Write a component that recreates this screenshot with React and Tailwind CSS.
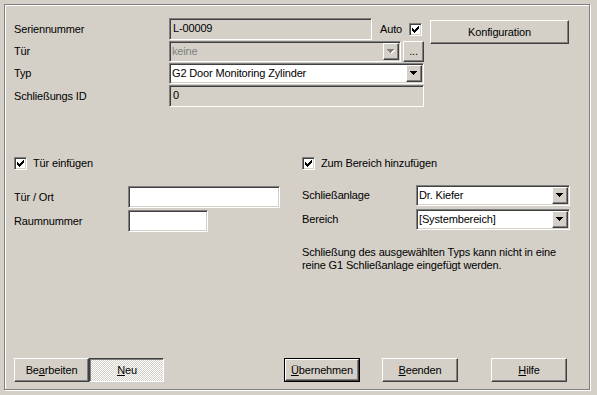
import React from "react";

const sunken =
  "border border-t-[#808080] border-l-[#808080] border-b-white border-r-white shadow-[inset_1px_1px_0_#404040,inset_-1px_-1px_0_#d4d0c8]";
const raised =
  "border border-t-white border-l-white border-b-[#404040] border-r-[#404040] shadow-[inset_-1px_-1px_0_#808080]";

const Check = () => (
  <div className={`w-[13px] h-[13px] bg-white ${sunken} flex items-center justify-center`}>
    <svg width="7" height="7" viewBox="0 0 7 7" shapeRendering="crispEdges">
      <path d="M0 2h1v3h-1zM1 3h1v3h-1zM2 4h1v3h-1zM3 3h1v3h-1zM4 2h1v3h-1zM5 1h1v3h-1zM6 0h1v3h-1z" fill="#000" />
    </svg>
  </div>
);

const Arrow = ({ disabled }) => (
  <svg width="8" height="5" viewBox="0 0 8 5" shapeRendering="crispEdges">
    {disabled && <path d="M1 1h7v1h-1v1h-1v1h-1v1h-1v-1h-1v-1h-1v-1h-1z" fill="#fff" />}
    <path d="M0 0h7v1h-1v1h-1v1h-1v1h-1v-1h-1v-1h-1v-1h-1z" fill={disabled ? "#808080" : "#000"} />
  </svg>
);

const Combo = ({ value, width, height = "h-[21px]", disabled }) => (
  <div className={`${width} ${height} ${sunken} ${disabled ? "bg-[#d4d0c8]" : "bg-white"} flex p-[1px]`}>
    <span className={`flex-1 pl-[1px] leading-[17px] ${disabled ? "text-[#808080]" : "text-black"}`}>{value}</span>
    <div className={`w-[16px] h-full ${raised} bg-[#d4d0c8] flex items-center justify-center`}>
      <Arrow disabled={disabled} />
    </div>
  </div>
);

const Field = ({ value, width, height = "h-[22px]", white }) => (
  <div className={`${width} ${height} ${sunken} ${white ? "bg-white" : "bg-[#d4d0c8]"} pl-[3px] pt-[2px] leading-[15px]`}>
    {value}
  </div>
);

const Button = ({ children, width = "w-[76px]", isDefault, pressed }) => {
  if (isDefault) {
    return (
      <div className={`${width} h-[24px] border border-black`}>
        <div className={`w-full h-full ${raised} bg-[#d4d0c8] flex items-center justify-center`}>{children}</div>
      </div>
    );
  }
  if (pressed) {
    return (
      <div
        className={`${width} h-[24px] border border-t-[#404040] border-l-[#404040] border-b-white border-r-white shadow-[inset_1px_1px_0_#808080] bg-[repeating-conic-gradient(#ffffff_0_25%,#d4d0c8_0_50%)] bg-[length:2px_2px] flex items-center justify-center pt-[1px] pl-[1px]`}
      >
        {children}
      </div>
    );
  }
  return (
    <div className={`${width} h-[24px] ${raised} bg-[#d4d0c8] flex items-center justify-center`}>{children}</div>
  );
};

export default function App() {
  return (
    <div className="w-[597px] h-[395px] bg-[#d4d0c8] p-[4px] font-['Liberation_Sans',Arial,sans-serif] text-[11px] tracking-[-0.15px] text-black overflow-hidden">
      <div className="w-[586px] h-[386px] border border-[#808080] shadow-[1px_1px_0_#fff,inset_1px_1px_0_#fff] flex flex-col pl-[9px] pt-[13px]">
        {/* Kopfbereich */}
        <div className="flex">
          <div className="flex flex-col gap-[1px]">
            <div className="flex items-center h-[22px]">
              <span className="w-[155px]">Seriennummer</span>
              <Field value="L-00009" width="w-[203px]" />
              <span className="ml-[8px] w-[29px]">Auto</span>
              <Check />
            </div>
            <div className="flex items-center h-[21px]">
              <span className="w-[155px]">Tür</span>
              <Combo value="keine" width="w-[232px]" disabled />
              <div className={`ml-[2px] w-[21px] h-[21px] ${raised} bg-[#d4d0c8] flex items-end justify-center pb-[4px] leading-none`}>
                ...
              </div>
            </div>
            <div className="flex items-center h-[21px]">
              <span className="w-[155px]">Typ</span>
              <Combo value="G2 Door Monitoring Zylinder" width="w-[255px]" />
            </div>
            <div className="flex items-center h-[22px]">
              <span className="w-[155px]">Schließungs ID</span>
              <Field value="0" width="w-[255px]" />
            </div>
          </div>
          <div className="ml-[6px] mt-[2px]">
            <Button width="w-[139px]">Konfiguration</Button>
          </div>
        </div>

        {/* Mittelteil */}
        <div className="flex mt-[50px]">
          <div className="w-[288px] flex flex-col">
            <div className="flex items-center gap-[6px] h-[13px]">
              <Check />
              <span>Tür einfügen</span>
            </div>
            <div className="flex items-center mt-[16px]">
              <span className="w-[114px]">Tür / Ort</span>
              <Field width="w-[152px]" white />
            </div>
            <div className="flex items-center mt-[2px]">
              <span className="w-[114px]">Raumnummer</span>
              <Field width="w-[80px]" white />
            </div>
          </div>
          <div className="flex flex-col">
            <div className="flex items-center gap-[6px] h-[13px]">
              <Check />
              <span>Zum Bereich hinzufügen</span>
            </div>
            <div className="flex items-center mt-[15px]">
              <span className="w-[114px]">Schließanlage</span>
              <Combo value="Dr. Kiefer" width="w-[154px]" />
            </div>
            <div className="flex items-center mt-[3px]">
              <span className="w-[114px]">Bereich</span>
              <Combo value="[Systembereich]" width="w-[154px]" />
            </div>
            <p className="mt-[16px] leading-[13px] w-[270px]">
              Schließung des ausgewählten Typs kann nicht in eine reine G1 Schließanlage eingefügt werden.
            </p>
          </div>
        </div>

        {/* Schaltflächen */}
        <div className="flex mt-auto mb-[7px]">
          <Button width="w-[75px]">
            <span>
              Be<u>a</u>rbeiten
            </span>
          </Button>
          <Button width="w-[75px]" pressed>
            <span>
              <u>N</u>eu
            </span>
          </Button>
          <div className="ml-[120px]">
            <Button isDefault>
              <span>
                <u>Ü</u>bernehmen
              </span>
            </Button>
          </div>
          <div className="ml-[22px]">
            <Button>
              <span>
                <u>B</u>eenden
              </span>
            </Button>
          </div>
          <div className="ml-[33px]">
            <Button>
              <span>
                <u>H</u>ilfe
              </span>
            </Button>
          </div>
        </div>
      </div>
    </div>
  );
}
